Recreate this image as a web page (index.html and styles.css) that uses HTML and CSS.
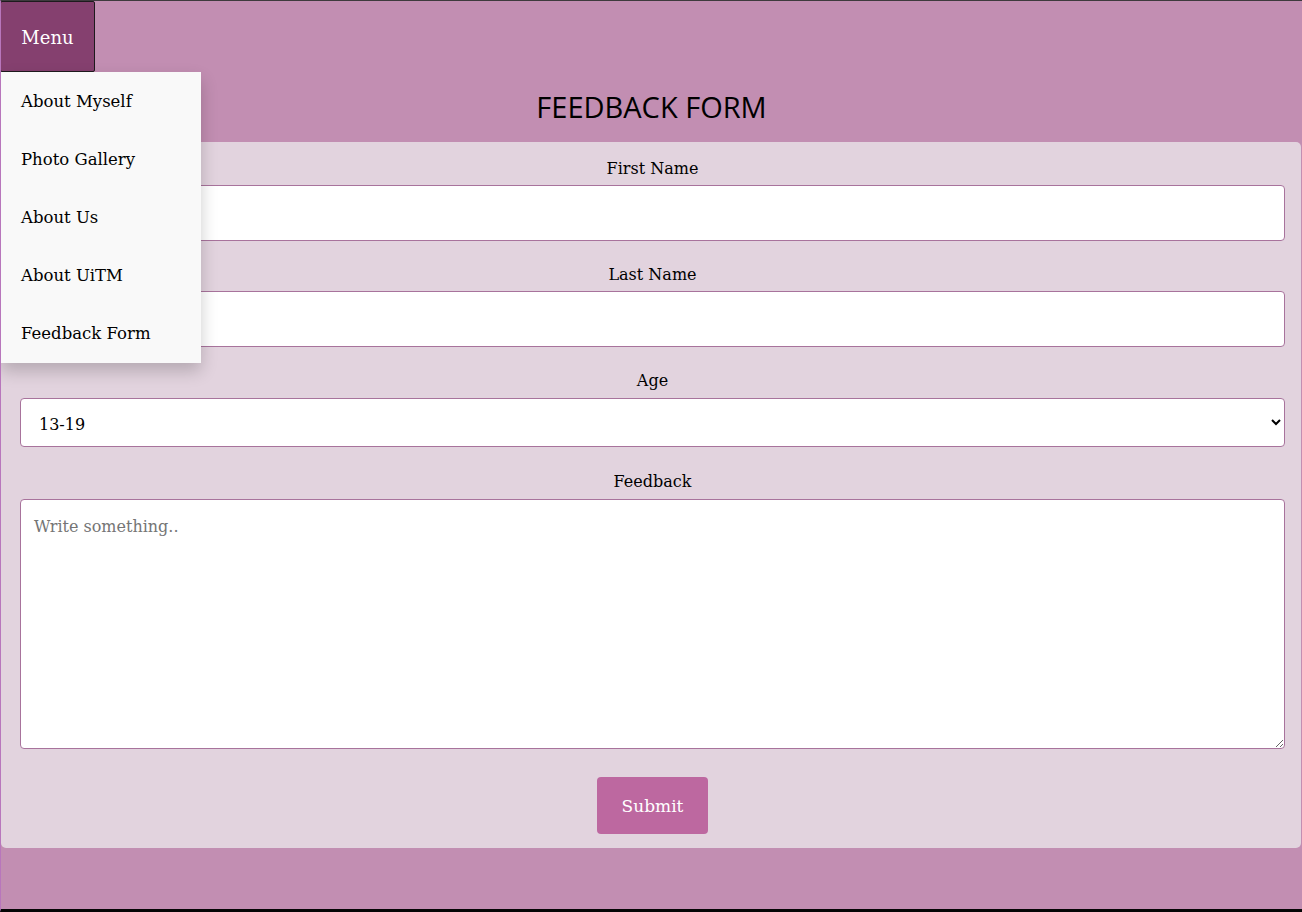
FILE: index.html
```html
<!DOCTYPE html>
<html lang="en">
<head>
<meta charset="utf-8">
<title>Feedback Form</title>
<link rel="stylesheet" href="styles.css">
</head>
<body>
<nav class="nav">
  <div class="dropdown">
    <button class="menu-btn" type="button">Menu</button>
    <div class="dropdown-content">
      <a class="dd-item" href="#">About Myself</a>
      <a class="dd-item" href="#">Photo Gallery</a>
      <a class="dd-item" href="#">About Us</a>
      <a class="dd-item" href="#">About UiTM</a>
      <a class="dd-item" href="#">Feedback Form</a>
    </div>
  </div>
</nav>
<h1 class="title">FEEDBACK FORM</h1>
<form class="form-box">
  <label class="lbl lbl-first" for="fname">First Name</label>
  <input class="field" type="text" id="fname" name="fname">
  <label class="lbl" for="lname">Last Name</label>
  <input class="field" type="text" id="lname" name="lname">
  <label class="lbl" for="age">Age</label>
  <select class="select" id="age" name="age">
    <option>13-19</option>
    <option>20-29</option>
    <option>30-39</option>
    <option>40+</option>
  </select>
  <label class="lbl lbl-fb" for="fb">Feedback</label>
  <textarea class="area" id="fb" name="fb" placeholder="Write something.."></textarea>
  <button class="submit" type="button">Submit</button>
</form>
</body>
</html>
```
FILE: styles.css
```css
* { box-sizing: border-box; }
html, body { margin: 0; padding: 0; }
body {
  min-height: 912px;
  height: 912px;
  background: #c28eb2;
  border-top: 1px solid #3e3a3d;
  border-left: 1px solid #b876bc;
  border-bottom: 3px solid #050505;
  font-family: "DejaVu Serif", Georgia, serif;
  overflow: hidden;
}
.nav { height: 71px; margin-left: -1px; }
.dropdown { position: relative; display: inline-block; }
.menu-btn {
  display: block;
  width: 95px;
  height: 71px;
  margin: 0;
  padding: 2px 0 0;
  background: #85406f;
  color: #ffffff;
  border: 1px solid #1e1a1d;
  border-radius: 2px;
  font-family: "DejaVu Serif", Georgia, serif;
  font-size: 18px;
  cursor: pointer;
}
.dropdown-content {
  position: absolute;
  left: 1px;
  top: 71px;
  width: 200px;
  background: #f9f9f9;
  box-shadow: 0 8px 16px rgba(0, 0, 0, 0.2);
  z-index: 10;
  display: flex;
  flex-direction: column;
}
.dd-item {
  display: block;
  height: 58px;
  line-height: 58px;
  padding: 1px 20px 0;
  color: #000;
  text-decoration: none;
  font-size: 16.5px;
}
.dd-item:last-child { height: 59px; }
.title {
  margin: 0;
  height: 70px;
  line-height: 69px;
  padding-top: 0;
  text-align: center;
  font-family: "Open Sans", "Noto Sans", sans-serif;
  font-weight: 400;
  font-size: 29px;
  color: #000;
}
.form-box {
  display: flex;
  flex-direction: column;
  width: 1300px;
  height: 706px;
  margin: 0;
  padding: 16px 16px 14px 19px;
  background: #e2d3de;
  border-radius: 5px;
}
.lbl {
  display: block;
  height: 20px;
  line-height: 22px;
  margin-top: 23px;
  text-align: center;
  font-size: 16px;
  color: #000;
}
.lbl-first { margin-top: 0; }
.lbl-fb { margin-top: 24px; }
.field {
  display: block;
  width: 100%;
  height: 56px;
  margin-top: 7px;
  padding: 0 12px;
  border: 1px solid #a8739c;
  border-radius: 4px;
  background: #fff;
  font-family: "DejaVu Serif", Georgia, serif;
  font-size: 16px;
}
.select {
  display: block;
  width: 100%;
  height: 49px;
  margin-top: 8px;
  padding: 3px 14px 0;
  border: 1px solid #a8739c;
  border-radius: 4px;
  background: #fff;
  color: #000;
  font-family: "DejaVu Serif", Georgia, serif;
  font-size: 16px;
}
.area {
  display: block;
  width: 100%;
  height: 250px;
  margin-top: 8px;
  padding: 17px 13px;
  border: 1px solid #a8739c;
  border-radius: 4px;
  background: #fff;
  font-family: "DejaVu Serif", Georgia, serif;
  font-size: 16px;
  resize: vertical;
}
.area::placeholder { color: #757575; }
.submit {
  align-self: center;
  width: 111px;
  height: 57px;
  margin-top: 28px;
  background: #bd68a0;
  color: #fff;
  border: none;
  border-radius: 4px;
  font-family: "DejaVu Serif", Georgia, serif;
  font-size: 17px;
  cursor: pointer;
}
```
